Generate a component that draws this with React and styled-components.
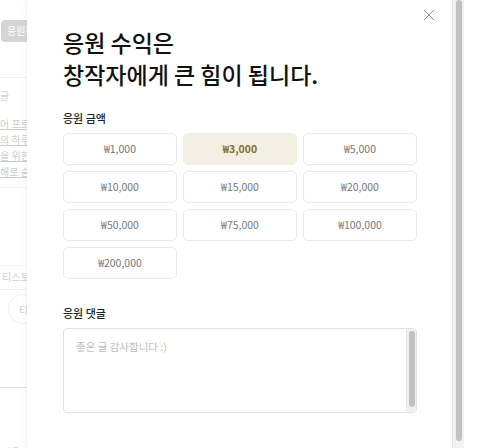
import React from "react";
import styled, { createGlobalStyle } from "styled-components";

const GlobalStyle = createGlobalStyle`
  html, body {
    margin: 0;
    padding: 0;
    background: #fff;
    overflow: hidden;
  }
  body {
    font-family: "Noto Sans CJK KR", "Noto Sans", sans-serif;
  }
`;

const Screen = styled.div`
  display: flex;
  width: 500px;
  height: 448px;
  background: #fff;
  overflow: hidden;
`;

const BackPage = styled.div`
  width: 27px;
  flex-shrink: 0;
  overflow: hidden;
  display: flex;
  flex-direction: column;
  opacity: 0.3;
  font-size: 10px;
  color: #555;
`;

const Pill = styled.div`
  margin-top: 20px;
  margin-left: 1px;
  width: 60px;
  height: 22px;
  line-height: 22px;
  border-radius: 4px;
  background: #777;
  color: #fff;
  padding-left: 6px;
  white-space: nowrap;
`;

const Rule = styled.div`
  height: 1px;
  width: 100%;
  margin-top: ${(p) => p.$top}px;
  background: ${(p) => p.$color || "#ddd"};
  flex-shrink: 0;
`;

const Caption = styled.div`
  margin-top: ${(p) => p.$top}px;
  padding-left: ${(p) => p.$left || 0}px;
  line-height: 14px;
  white-space: nowrap;
  color: #666;
`;

const LinkLine = styled.div`
  line-height: 16px;
  white-space: nowrap;
  text-decoration: underline;
  color: #555;
`;

const Links = styled.div`
  margin-top: 13px;
  display: flex;
  flex-direction: column;
`;

const Chip = styled.div`
  margin-top: 4px;
  margin-left: 8px;
  width: 30px;
  height: 30px;
  flex-shrink: 0;
  border: 1px solid #ccc;
  border-radius: 50%;
  box-sizing: border-box;
  display: flex;
  align-items: center;
  padding-left: 10px;
  color: #666;
`;

const Panel = styled.div`
  width: 437px;
  flex-shrink: 0;
  height: 448px;
  display: flex;
  background: #fff;
  box-shadow: 0 0 6px rgba(0, 0, 0, 0.07);
`;

const Body = styled.div`
  position: relative;
  flex: 1;
  overflow: hidden;
`;

const Content = styled.div`
  padding: 26px 35px 0 36px;
  display: flex;
  flex-direction: column;
`;

const Track = styled.div`
  width: ${(p) => p.$w}px;
  flex-shrink: 0;
  box-sizing: border-box;
  background: #f1f1f1;
  border-left: 1px solid #e6e6e6;
  padding: ${(p) => p.$pad};
  display: flex;
  flex-direction: column;
`;

const Thumb = styled.div`
  background: #c1c1c1;
  border-radius: 3px;
  margin: 0 ${(p) => p.$side}px;
  flex-shrink: 0;
`;

const CloseButton = styled.button`
  position: absolute;
  top: 8px;
  right: 16px;
  width: 14px;
  height: 14px;
  padding: 0;
  border: 0;
  background: none;
  display: flex;
  align-items: center;
  justify-content: center;
  cursor: pointer;
`;

const Title = styled.h2`
  margin: 0;
  font-size: 23px;
  line-height: 32px;
  font-weight: 500;
  color: #111;
`;

const Label = styled.div`
  margin-top: ${(p) => p.$top}px;
  font-size: 11px;
  line-height: 16px;
  font-weight: 500;
  color: #222;
`;

const AmountGrid = styled.div`
  margin-top: 7px;
  display: grid;
  grid-template-columns: repeat(3, 1fr);
  column-gap: 6px;
  row-gap: 6.5px;
`;

const Amount = styled.button`
  height: 31.5px;
  border-radius: 5px;
  border: 1px solid ${(p) => (p.$active ? "#f3efe3" : "#e9e9e9")};
  background: ${(p) => (p.$active ? "#f3efe3" : "#fff")};
  color: ${(p) => (p.$active ? "#85702c" : "#777")};
  font-family: "Noto Sans CJK KR", "Noto Sans", sans-serif;
  font-size: 10.5px;
  font-weight: ${(p) => (p.$active ? 700 : 400)};
  padding: 0;
  cursor: pointer;
`;

const CommentBox = styled.div`
  margin-top: 7px;
  height: 85px;
  box-sizing: border-box;
  border: 1px solid #e2e2e2;
  border-radius: 4px;
  display: flex;
  overflow: hidden;
`;

const Comment = styled.textarea`
  flex: 1;
  border: 0;
  padding: 10px 12px;
  font-family: "Noto Sans CJK KR", "Noto Sans", sans-serif;
  font-size: 10.5px;
  line-height: 16px;
  color: #333;
  resize: none;
  outline: none;
  background: transparent;

  &::placeholder {
    color: #bdbdbd;
  }
`;

const Rest = styled.div`
  flex: 1;
  background: #fff;
`;

const amounts = [
  "1,000",
  "3,000",
  "5,000",
  "10,000",
  "15,000",
  "20,000",
  "50,000",
  "75,000",
  "100,000",
  "200,000",
];

export default function App() {
  return (
    <>
      <GlobalStyle />
      <Screen>
        <BackPage>
          <Pill>응원하기</Pill>
          <Rule $top={35} $color="#ccc" />
          <Caption $top={11}>글</Caption>
          <Links>
            <LinkLine>어 프로</LinkLine>
            <LinkLine>의 하루방</LinkLine>
            <LinkLine>을 위한</LinkLine>
            <LinkLine>해로 숨은</LinkLine>
          </Links>
          <Rule $top={7} $color="#ccc" />
          <Rule $top={77} $color="#ddd" />
          <Caption $top={4} $left={2}>티스토리</Caption>
          <Rule $top={5} $color="#ccc" />
          <Chip>티</Chip>
          <Rule $top={63} $color="#999" />
          <Caption $top={57} $left={2}>다음 대</Caption>
        </BackPage>

        <Panel>
          <Body>
            <CloseButton aria-label="닫기">
              <svg width="12" height="12" viewBox="0 0 12 12">
                <path d="M1 1 L11 11 M11 1 L1 11" stroke="#8c8c8c" strokeWidth="1" fill="none" />
              </svg>
            </CloseButton>
            <Content>
              <Title>
                응원 수익은
                <br />
                창작자에게 큰 힘이 됩니다.
              </Title>
              <Label $top={20}>응원 금액</Label>
              <AmountGrid>
                {amounts.map((a) => (
                  <Amount key={a} $active={a === "3,000"}>
                    ₩{a}
                  </Amount>
                ))}
              </AmountGrid>
              <Label $top={26}>응원 댓글</Label>
              <CommentBox>
                <Comment placeholder="좋은 글 감사합니다 :)" />
                <Track $w={10} $pad="2px 0">
                  <Thumb $side={1.5} style={{ height: 76 }} />
                </Track>
              </CommentBox>
            </Content>
          </Body>
          <Track $w={12} $pad="0">
            <Thumb $side={2.5} style={{ height: 441 }} />
          </Track>
        </Panel>
        <Rest />
      </Screen>
    </>
  );
}
